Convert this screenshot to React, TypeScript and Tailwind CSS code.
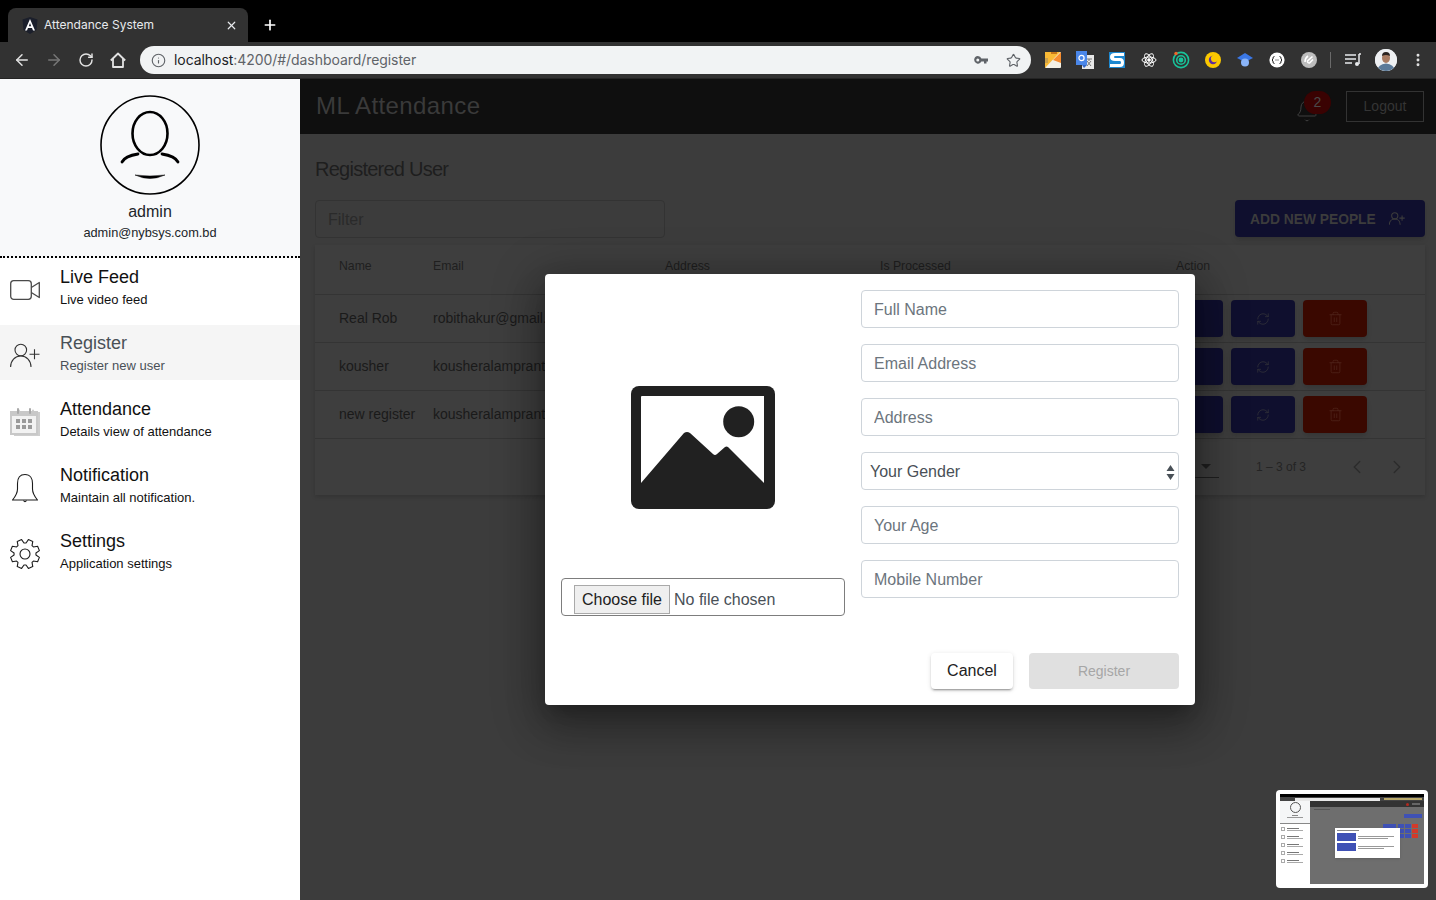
import React from "react";
import { ArrowLeft, ArrowRight, RotateCw, Info, Star, X, Plus, ChevronLeft, ChevronRight, EllipsisVertical, Bell, RefreshCw, Trash2 } from "lucide-react";

const sans = { fontFamily: '"Liberation Sans", Arial, sans-serif' };

function Ext({ children }: { children: React.ReactNode }) {
  return <div className="w-8 h-8 flex items-center justify-center shrink-0">{children}</div>;
}

function Extensions() {
  return (
    <div className="flex items-center ml-[6px]">
      <Ext><svg width="16" height="16" viewBox="0 0 16 16"><rect width="16" height="16" rx="1" fill="#f4f1e6" /><path d="M0 0H15L0 16Z" fill="#f9b935" /><path d="M16 0V11L8 8Z" fill="#f78d2f" /><rect x="6" y="0" width="6" height="2" fill="#c8761a" /><rect x="0" y="6" width="3" height="5" fill="#caa04a" /></svg></Ext>
      <Ext><svg width="18" height="18" viewBox="0 0 18 18"><rect x="6" y="4" width="12" height="14" fill="#e8e8e8" /><path d="M10 8h6M13 8v2M11 15l4-5M11 10l4 5" stroke="#777" strokeWidth="1" fill="none" /><path d="M0 0H11V14H0Z" fill="#4a86e8" /><path d="M6 14h5l-3 3Z" fill="#3367c7" /><circle cx="5.500" cy="7" r="2.600" fill="none" stroke="#fff" strokeWidth="1.200" /></svg></Ext>
      <Ext><svg width="16" height="16" viewBox="0 0 16 16"><rect width="16" height="16" fill="#1e88d0" /><path d="M15 1H6Q1 1 1 5T6 9H11Q12 9 12 10.500T11 12H1V15H11Q15 15 15 10.500T11 6H6Q5 6 5 5T6 4H15Z" fill="#fff" /></svg></Ext>
      <Ext><svg width="16" height="16" viewBox="0 0 16 16" fill="none" stroke="#fff" strokeWidth="1"><ellipse cx="8" cy="8" rx="7" ry="3" /><ellipse cx="8" cy="8" rx="7" ry="3" transform="rotate(60 8 8)" /><ellipse cx="8" cy="8" rx="7" ry="3" transform="rotate(120 8 8)" /><circle cx="8" cy="8" r="1.300" fill="#fff" /></svg></Ext>
      <Ext><svg width="18" height="18" viewBox="0 0 18 18" fill="none" stroke="#18c39a" strokeWidth="1.600"><circle cx="9" cy="9" r="7.600" /><circle cx="9" cy="9" r="4.300" /><circle cx="9" cy="9" r="1.600" fill="#18c39a" /><circle cx="4" cy="2.500" r="1.700" fill="#f0652a" stroke="none" /></svg></Ext>
      <Ext><svg width="16" height="16" viewBox="0 0 16 16"><circle cx="8" cy="8" r="8" fill="#fbc800" /><circle cx="8" cy="8" r="4.200" fill="#5a2ca0" /><circle cx="9.500" cy="6.600" r="3.600" fill="#fbc800" /></svg></Ext>
      <Ext><svg width="16" height="16" viewBox="0 0 16 16"><path d="M8 1L16 6L8 10L0 6Z" fill="#3b78e7" /><circle cx="8" cy="10.500" r="4" fill="#8ab4f8" /></svg></Ext>
      <Ext><svg width="16" height="16" viewBox="0 0 16 16"><circle cx="8" cy="8" r="7.600" fill="#fff" /><path d="M5.500 4.500Q4 4.500 4 6V7L3 8L4 9V10Q4 11.500 5.500 11.500M10.500 4.500Q12 4.500 12 6V7L13 8L12 9V10Q12 11.500 10.500 11.500" fill="none" stroke="#222" strokeWidth="1" /><path d="M6.500 8H9.500" stroke="#222" strokeWidth="1" strokeDasharray="1 1" /></svg></Ext>
      <Ext><svg width="16" height="16" viewBox="0 0 16 16"><circle cx="8" cy="8" r="8" fill="#bdbdbd" /><path d="M11.500 4.500L6.500 9A1.700 1.700 0 0 0 8.500 11L12 7.500" fill="none" stroke="#fff" strokeWidth="1.600" /><path d="M4 10Q4 6 7 4" fill="none" stroke="#fff" strokeWidth="1.600" /></svg></Ext>
    </div>
  );
}

function ChromeBar() {
  return (
    <div className="shrink-0" style={{ fontFamily: "Inter, sans-serif" }}>
      <div className="h-[42px] bg-black flex items-end pl-2">
        <div className="w-[240px] h-[34px] bg-[#323232] rounded-t-lg flex items-center pl-[14px] pr-[10px]">
          <svg width="16" height="17" viewBox="0 0 16 17" className="shrink-0"><path d="M8 0L15.500 2.500L14.500 13L8 17L1.500 13L.5 2.500Z" fill="#1b1f2b" /><path d="M8 2L13 13.500H11L10 11H6L5 13.500H3ZM8 6L6.800 9.300H9.200Z" fill="#fff" /></svg>
          <span className="ml-[6px] text-xs text-[#e8eaed] flex-1 whitespace-nowrap">Attendance System</span>
          <X size={13} strokeWidth={2.200} className="text-[#e8eaed]" />
        </div>
        <div className="h-[34px] flex items-center ml-[14px]"><Plus size={16} strokeWidth={2.500} className="text-white" /></div>
      </div>
      <div className="h-[37px] bg-[#323232] flex items-center border-b border-[#242424]">
        <div className="w-[140px] flex items-center pl-[6px] shrink-0">
          <div className="w-8 flex justify-center"><ArrowLeft size={18} strokeWidth={2} className="text-[#e2e2e2]" /></div>
          <div className="w-8 flex justify-center"><ArrowRight size={18} strokeWidth={2} className="text-[#777777]" /></div>
          <div className="w-8 flex justify-center"><RotateCw size={16} strokeWidth={2.200} className="text-[#e2e2e2]" /></div>
          <div className="w-8 flex justify-center">
            <svg width="16" height="16" viewBox="0 0 16 16" fill="none" stroke="#e2e2e2" strokeWidth="1.800" strokeLinejoin="round"><path d="M.8 8.500L8 1.500L15.200 8.500" /><path d="M3 6.500V15H13V6.500" /></svg>
          </div>
        </div>
        <div className="w-[891px] h-7 rounded-full bg-[#f1f3f4] flex items-center pl-[11px] pr-[10px] shrink-0">
          <Info size={15} strokeWidth={1.800} className="text-[#5f6368]" />
          <span className="ml-[8px] text-sm tracking-[-0.06px] text-[#5f6368] flex-1 whitespace-nowrap"><span className="text-[#202124]">localhost</span>:4200/#/dashboard/register</span>
          <svg width="14" height="8" viewBox="0 0 14 8" className="mr-[18px]" fill="#5f6368"><path fillRule="evenodd" d="M3.800 0A3.800 3.800 0 0 1 7.400 2.500H14V5.500H12.500V7.500H10V5.500H7.400A3.800 3.800 0 1 1 3.800 0ZM3.800 2.500A1.500 1.500 0 1 0 3.800 5.500A1.500 1.500 0 1 0 3.800 2.500Z" /></svg>
          <Star size={15} strokeWidth={1.800} className="text-[#5f6368]" />
        </div>
        <Extensions />
        <div className="w-px h-4 bg-[#6a6a6a] ml-[5px]" />
        <svg width="18" height="14" viewBox="0 0 18 14" className="ml-[13px]" fill="none" stroke="#e8eaed" strokeWidth="1.500"><path d="M1 2H12M1 6H12M1 10H8" /><path d="M15 1V11" /><circle cx="13" cy="11" r="2" fill="#e8eaed" stroke="none" /><path d="M15 1H17" /></svg>
        <div className="ml-[13px] w-[22px] h-[22px] rounded-full bg-[#dfe3e8] overflow-hidden relative shrink-0">
          <svg width="22" height="22" viewBox="0 0 22 22"><rect width="22" height="22" fill="#eef0f2" /><path d="M2 22Q3 15 11 14.500Q19 15 20 22Z" fill="#5b7a99" /><ellipse cx="11" cy="9" rx="4" ry="5" fill="#a87b62" /><path d="M7 7Q7 3 11 3Q15 3 15 7Q11 5 7 7Z" fill="#2b2320" /></svg>
        </div>
        <EllipsisVertical size={16} strokeWidth={2.400} className="text-[#e2e2e2] ml-[13px]" />
      </div>
    </div>
  );
}

function Avatar() {
  return (
    <svg width="100" height="100" viewBox="0 0 100 100" fill="none" stroke="#000">
      <circle cx="50" cy="50" r="49" strokeWidth="1.600" />
      <ellipse cx="50" cy="38.500" rx="17.500" ry="21.500" strokeWidth="2.600" />
      <path d="M22 67Q25 61 38 59M78 67Q75 61 62 59" strokeWidth="2.800" strokeLinecap="round" />
      <path d="M35 80Q50 82 65 80Q50 87 35 80Z" fill="#000" strokeWidth="0.500" />
    </svg>
  );
}

function CameraIcon() {
  return (
    <svg width="30" height="30" viewBox="0 0 30 30" fill="none" stroke="#4a4a4a" strokeWidth="1.300" strokeLinejoin="round">
      <rect x=".7" y="5.700" width="20.600" height="18.600" rx="3" />
      <path d="M21.300 12.500L29.300 7.500V22.500L21.300 17.500" />
    </svg>
  );
}

function UserPlusIcon({ size = 30, color = "#333333" }: { size?: number; color?: string }) {
  return (
    <svg width={size} height={size} viewBox="0 0 30 30" fill="none" stroke={color} strokeWidth={size < 20 ? 2 : 1.100}>
      <circle cx="10.800" cy="9" r="5.800" />
      <path d="M.6 26C.6 19.500 5 15 10.800 15S21 19.500 21 26" />
      <path d="M19.500 13.300H29.500M24.500 8.300V18.300" />
    </svg>
  );
}

function BellIcon() {
  return (
    <svg width="30" height="30" viewBox="0 0 30 30" fill="none" stroke="#1c1c1c" strokeWidth="1.100" strokeLinejoin="round">
      <path d="M15 1.500C9.500 1.500 7.500 6 7.500 10.500V16C7.500 20 5 24 2.500 27H27.500C25 24 22.500 20 22.500 16V10.500C22.500 6 20.500 1.500 15 1.500Z" />
      <path d="M13.500 27.500Q15 29.800 16.500 27.500" />
    </svg>
  );
}

const gearPoints = Array.from({ length: 8 }, (_, i) => {
  const a = (i * Math.PI) / 4 + Math.PI / 8;
  const p = (r: number, d: number) => `${(15 + r * Math.cos(a + d)).toFixed(2)},${(15 + r * Math.sin(a + d)).toFixed(2)}`;
  return [p(11, -0.3), p(14.8, -0.16), p(14.8, 0.16), p(11, 0.3)].join(" ");
}).join(" ");

function GearIcon() {
  return (
    <svg width="30" height="30" viewBox="0 0 30 30" fill="none" stroke="#1c1c1c" strokeWidth="1.100" strokeLinejoin="round">
      <polygon points={gearPoints} />
      <circle cx="15" cy="15" r="5" />
    </svg>
  );
}

function CalendarIcon() {
  return (
    <svg width="30" height="30" viewBox="0 0 30 30">
      <path d="M3 4H7V2.500A1 1 0 0 1 9 2.500V4H21V2.500A1 1 0 0 1 23 2.500V4H29V28H3Z" fill="#bdbdbd" transform="translate(1 1)" opacity="0.75" />
      <rect x="0" y="4" width="28" height="24" fill="#c8c8c8" />
      <rect x="2" y="9" width="24" height="17" fill="#f2f2f2" />
      <rect x="7" y="1" width="2" height="6" rx="1" fill="#a8a8a8" /><rect x="19" y="1" width="2" height="6" rx="1" fill="#a8a8a8" />
      <g fill="#9a9a9a">
        <rect x="6" y="12" width="4" height="4" /><rect x="12" y="12" width="4" height="4" /><rect x="18" y="12" width="4" height="4" />
        <rect x="6" y="18" width="4" height="4" /><rect x="12" y="18" width="4" height="4" /><rect x="18" y="18" width="4" height="4" />
      </g>
    </svg>
  );
}

const navItems = [
  { t: "Live Feed", s: "Live video feed", i: <CameraIcon /> },
  { t: "Register", s: "Register new user", i: <UserPlusIcon />, active: true },
  { t: "Attendance", s: "Details view of attendance", i: <CalendarIcon /> },
  { t: "Notification", s: "Maintain all notification.", i: <BellIcon /> },
  { t: "Settings", s: "Application settings", i: <GearIcon /> },
];

function Sidebar() {
  return (
    <aside className="w-[300px] shrink-0 bg-white" style={sans}>
      <div className="h-[179px] bg-[#f8f9fa] border-b-2 border-dotted border-black flex flex-col items-center pt-4">
        <Avatar />
        <div className="mt-[5px] text-base leading-6 text-[#212529]">admin</div>
        <div className="text-[12.8px] leading-[18px] text-[#212529]">admin@nybsys.com.bd</div>
      </div>
      <nav className="pt-px">
        {navItems.map((n) => (
          <div key={n.t} className={`h-[55px] mb-[11px] flex ${n.active ? "bg-[#f5f5f5] text-[#495057]" : "text-[#111111]"}`}>
            <div className="w-[60px] pl-[10px] pt-[16px] shrink-0">{n.i}</div>
            <div>
              <div className="text-lg leading-[22px] mt-[7px]">{n.t}</div>
              <div className="text-[13px] leading-4 mt-[4px]">{n.s}</div>
            </div>
          </div>
        ))}
      </nav>
    </aside>
  );
}

const cols = "grid grid-cols-[94px_232px_215px_296px_1fr]";

const rows = [
  ["Real Rob", "robithakur@gmail.com"],
  ["kousher", "kousheralamprantik@gmail.com"],
  ["new register", "kousheralamprantik@gmail.com"],
];

function Dashboard() {
  return (
    <div className="h-full bg-[#3c3c3c] flex flex-col">
      <header className="h-[55px] bg-[#0f0f0f] flex items-center pl-4 pr-3 shrink-0">
        <h1 className="text-2xl tracking-[0.4px] text-[#3a3a3a] flex-1 pb-px">ML Attendance</h1>
        <div className="relative mr-[16px] w-[28px] h-[32px]">
          <Bell size={24} strokeWidth={1} className="absolute left-0 top-[8px] text-[#3f3f3f]" />
          <span className="absolute left-[9px] top-0 w-[27px] h-[23px] rounded-full bg-[#3a0202] text-[#4a4a4a] text-sm flex items-center justify-center">2</span>
        </div>
        <div className="ml-[7px] w-[78px] h-[31px] border border-[#333333] text-[#353535] text-sm pb-[2px] flex items-center justify-center">Logout</div>
      </header>
      <div className="px-[15px] pr-[11px]">
        <h2 className="pt-[23px] text-xl leading-[24px] text-[#1e1e1e] font-light tracking-[-0.75px]">Registered User</h2>
        <div className="mt-[19px] flex justify-between items-start">
          <div className="w-[350px] h-[38px] border border-[#333333] rounded-[4px] pl-3 pt-px flex items-center text-base text-[#2a2a2a]">Filter</div>
          <div className="w-[190px] h-[37px] rounded-[4px] bg-[#0f0f2e] shadow-md flex items-center pl-[15px] gap-[13px] text-[13.8px] leading-5 font-bold text-[#3c3c3c]">
            <span className="pt-[3px]">ADD NEW PEOPLE</span>
            <UserPlusIcon size={16} color="#3c3c3c" />
          </div>
        </div>
        <div className="mt-[7px] bg-[#3e3e3e] shadow-[0_2px_4px_rgba(0,0,0,.15)]">
          <div className={`${cols} h-[50px] items-center pl-6 pb-[7px] text-[12.25px] text-[#1f1f1f] border-b border-[#343434]`}>
            <div>Name</div><div>Email</div><div>Address</div><div>Is Processed</div><div>Action</div>
          </div>
          {rows.map((r) => (
            <div key={r[0]} className={`${cols} h-[48px] items-center pl-6 text-sm text-[#1a1a1a] border-b border-[#343434]`}>
              <div className="whitespace-nowrap pb-[2px]">{r[0]}</div>
              <div className="whitespace-nowrap overflow-hidden pb-[2px]">{r[1]}</div>
              <div /><div />
              <div className="flex gap-2 -ml-[17px]">
                <div className="w-16 h-[37px] rounded-[4px] bg-[#0f0f2e] shadow-md" />
                <div className="w-16 h-[37px] rounded-[4px] bg-[#0f0f2e] shadow-md flex items-center justify-center"><RefreshCw size={14} strokeWidth={1} className="text-[#3c3c3c]" /></div>
                <div className="w-16 h-[37px] rounded-[4px] bg-[#3a0800] shadow-md flex items-center justify-center"><Trash2 size={15} strokeWidth={1} className="text-[#552c20]" /></div>
              </div>
            </div>
          ))}
          <div className="h-[56px] flex items-center justify-end text-xs text-[#242424]">
            <div className="w-[60px] h-[22px] border-b border-[#1f1f1f] flex justify-end items-center pr-[8px] mr-[37px]"><span className="w-0 h-0 border-x-[5px] border-x-transparent border-t-[5px] border-t-[#1f1f1f]" /></div>
            <span className="mr-[40px]">1 – 3 of 3</span>
            <ChevronLeft size={22} strokeWidth={1.500} className="text-[#2c2c2c] mr-[18px]" />
            <ChevronRight size={22} strokeWidth={1.500} className="text-[#2c2c2c] mr-[17px]" />
          </div>
        </div>
      </div>
    </div>
  );
}

function Field({ label }: { label: string }) {
  return <input placeholder={label} readOnly className="block w-full h-[38px] border border-[#ced4da] rounded-[4px] px-3 pt-[2px] text-base text-[#495057] placeholder:text-[#6c757d] bg-white outline-none" />;
}

function Modal() {
  return (
    <div className="w-[650px] h-[431px] bg-white rounded-[4px] shadow-[0_11px_15px_-7px_rgba(0,0,0,.2),0_24px_38px_3px_rgba(0,0,0,.14),0_9px_46px_8px_rgba(0,0,0,.3)] p-4 flex flex-col" style={sans}>
      <div className="flex gap-4 flex-1">
        <div className="w-[284px] flex flex-col">
          <div className="h-[288px] flex justify-center pt-[96px]">
            <svg width="144" height="123" viewBox="0 0 144 123">
              <rect width="144" height="123" rx="8" fill="#212121" />
              <path d="M11 10H133V97L97 61Q95.500 60 94 61L86 68Q84 70 82 68L59 47Q56 45 53 47L10 97V11Q10 10 11 10Z" fill="#fff" />
              <circle cx="107.700" cy="35.700" r="15.500" fill="#212121" />
            </svg>
          </div>
          <div className="h-[38px] border border-[#7d7d7d] rounded-[4px] flex items-start pt-[6px] pl-3 text-base text-[#495057]">
            <span className="h-[29px] w-[96px] bg-[#efefef] border border-[#a9a9a9] text-[#212121] flex items-center justify-center shrink-0">Choose file</span>
            <span className="ml-1 leading-[29px]">No file chosen</span>
          </div>
        </div>
        <div className="flex-1 flex flex-col gap-4">
          <Field label="Full Name" />
          <Field label="Email Address" />
          <Field label="Address" />
          <div className="h-[38px] border border-[#ced4da] rounded-[4px] pl-2 pr-[3px] pt-[2px] flex items-center justify-between text-base text-[#495057]">
            <span>Your Gender</span>
            <svg width="9" height="15" viewBox="0 0 9 15" fill="#495057"><path d="M4.500 0L8.500 6H.5ZM.5 9H8.500L4.500 15Z" /></svg>
          </div>
          <Field label="Your Age" />
          <Field label="Mobile Number" />
        </div>
      </div>
      <div className="flex justify-end items-center gap-4 h-[36px]">
        <div className="w-[82px] h-[36px] rounded-[4px] bg-white text-[#212121] text-base flex items-center justify-center shadow-[0_3px_1px_-2px_rgba(0,0,0,.2),0_2px_2px_0_rgba(0,0,0,.14),0_1px_5px_0_rgba(0,0,0,.12)]">Cancel</div>
        <div className="w-[150px] h-[36px] rounded-[4px] bg-[#e0e0e0] text-[#a6a6a6] text-sm flex items-center justify-center">Register</div>
      </div>
    </div>
  );
}

function ThumbLine({ w, c = "bg-[#9a9a9a]" }: { w: string; c?: string }) {
  return <div className={`h-px ${w} ${c}`} />;
}

function ThumbNav() {
  return (
    <div className="flex gap-[2px] items-center pl-[1px]">
      <div className="w-[4px] h-[4px] border border-[#aaaaaa] shrink-0" />
      <div className="flex flex-col gap-[1px]">
        <ThumbLine w="w-[12px]" c="bg-[#777777]" />
        <ThumbLine w="w-[16px]" c="bg-[#aaaaaa]" />
      </div>
    </div>
  );
}

function ThumbRow() {
  return (
    <div className="flex gap-px">
      <div className="w-[6px] h-[4px] bg-[#3f51b5]" />
      <div className="w-[6px] h-[4px] bg-[#3f51b5]" />
      <div className="w-[6px] h-[4px] bg-[#d23a2a]" />
    </div>
  );
}

function Thumbnail() {
  return (
    <div className="absolute right-2 bottom-3 w-[152px] h-[98px] bg-white rounded-[4px] p-1">
      <div className="w-full h-full flex flex-col bg-[#6e6e6e] overflow-hidden blur-[0.5px]">
        <div className="h-[3px] bg-black" />
        <div className="h-[4px] bg-[#444444] flex items-center pl-[15px]"><div className="w-[85px] h-[3px] bg-[#e8e8e8]" /><div className="ml-1 w-[38px] h-[2px] bg-[#b9a96b]" /></div>
        <div className="flex-1 flex">
          <div className="w-[30px] bg-white flex flex-col">
            <div className="h-[23px] bg-[#f5f6f7] border-b border-[#888888] flex flex-col items-center pt-px">
              <div className="w-[11px] h-[11px] rounded-full border border-[#555555]" />
              <div className="mt-[2px] w-[6px] h-px bg-[#888888]" />
              <div className="mt-px w-[16px] h-px bg-[#999999]" />
            </div>
            <div className="flex flex-col gap-[4px] pt-[3px]"><ThumbNav /><ThumbNav /><ThumbNav /><ThumbNav /><ThumbNav /></div>
          </div>
          <div className="flex-1 flex flex-col">
            <div className="h-[6px] bg-[#333333] flex justify-end items-center pr-[4px] gap-[3px]"><div className="w-[3px] h-[3px] rounded-full bg-[#b32a20]" /><div className="w-[8px] h-[2px] bg-[#666666]" /></div>
            <div className="relative flex-1 pl-1 pt-[2px]">
              <ThumbLine w="w-[16px]" c="bg-[#555555]" />
              <div className="absolute right-[2px] top-[7px] w-[18px] h-[4px] bg-[#3f51b5]" />
              <div className="absolute left-[73px] top-[17px] flex gap-px">
                <div className="w-[13px] h-[4px] bg-[#3f51b5]" />
              </div>
              <div className="absolute right-[6px] top-[17px] flex flex-col gap-px"><ThumbRow /><ThumbRow /><ThumbRow /></div>
              <div className="absolute left-[25px] top-[21px] w-[65px] h-[30px] bg-white shadow p-[2px] flex flex-col gap-[2px]">
                <ThumbLine w="w-[22px]" c="bg-[#888888]" />
                <div className="flex gap-[2px] items-center">
                  <div className="w-[19px] h-[8px] bg-[#3f51b5] shrink-0" />
                  <div className="flex flex-col gap-px"><ThumbLine w="w-[36px]" /><ThumbLine w="w-[30px]" /></div>
                </div>
                <div className="flex gap-[2px] items-center">
                  <div className="w-[19px] h-[8px] bg-[#3f51b5] shrink-0" />
                  <div className="flex flex-col gap-px"><ThumbLine w="w-[36px]" /><ThumbLine w="w-[26px]" /></div>
                </div>
              </div>
            </div>
          </div>
        </div>
      </div>
    </div>
  );
}

export default function App() {
  return (
    <div className="w-[1436px] h-[900px] flex flex-col overflow-hidden bg-white" style={sans}>
      <ChromeBar />
      <div className="flex flex-1 min-h-0">
        <Sidebar />
        <main className="flex-1 relative">
          <Dashboard />
          <div className="absolute inset-0 flex items-center justify-center pl-1">
            <Modal />
          </div>
          <Thumbnail />
        </main>
      </div>
    </div>
  );
}
